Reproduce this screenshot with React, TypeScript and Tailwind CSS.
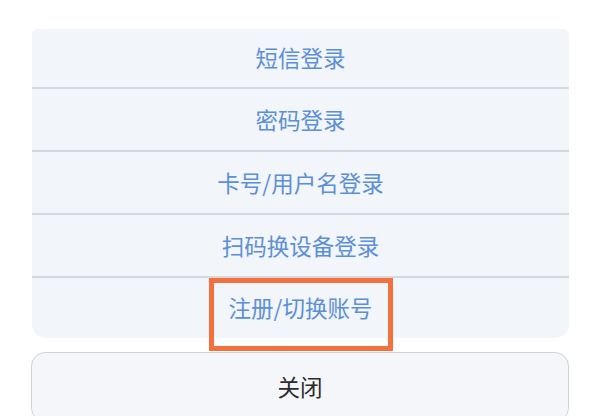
const options = ['短信登录', '密码登录', '卡号/用户名登录', '扫码换设备登录'];

export default function App() {
  return (
    <div
      className="w-[600px] h-[416px] overflow-hidden bg-white"
      style={{ fontFamily: '"Noto Sans CJK SC", "Noto Sans", sans-serif' }}
    >
      <div className="ml-[32px] mt-[29px] w-[537px] rounded-t-[6px] rounded-b-[14px] bg-[#f2f5f9]">
        {options.map((label, i) => (
          <div
            key={label}
            className={
              i === 0
                ? 'flex h-[60px] items-center justify-center border-b-2 border-[#d5d9df] text-[22.5px] text-[#5b8fd8]'
                : 'flex h-[63px] items-center justify-center border-b-2 border-[#d5d9df] text-[22.5px] text-[#5b8fd8]'
            }
          >
            {label}
          </div>
        ))}
        <div className="relative flex h-[60px] items-center justify-center text-[22.5px] text-[#5b8fd8]">
          <span>注册/切换账号</span>
          <div className="absolute left-[177px] top-0 h-[73px] w-[184px] border-[5px] border-[#f5703d]" />
        </div>
      </div>
      <button className="ml-[31px] mt-[14px] flex h-[70px] w-[538px] items-center justify-center rounded-[14px] border border-[#cfd2d6] bg-[#f4f6f9] text-[22.5px] text-[#2b2b2b]">
        关闭
      </button>
    </div>
  );
}
